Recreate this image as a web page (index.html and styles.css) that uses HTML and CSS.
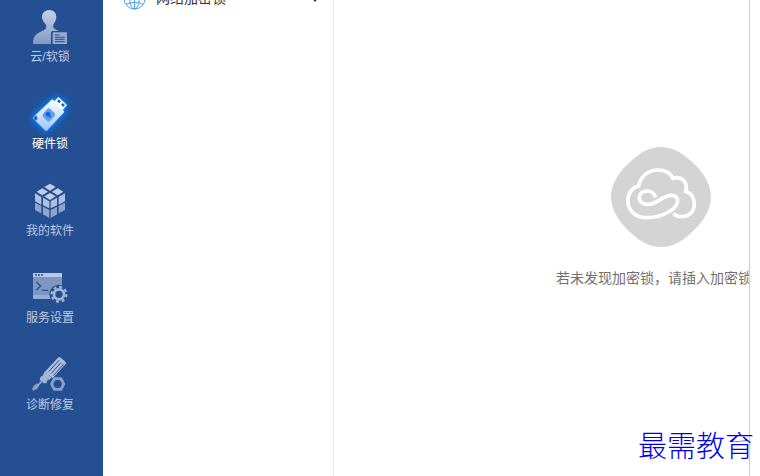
FILE: index.html
```
<!DOCTYPE html>
<html lang="zh-CN">

<head>
    <meta charset="UTF-8">
    <meta name="viewport" content="width=device-width, initial-scale=1.0">
    <title>加密锁</title>
    <link rel="stylesheet" href="styles.css">
</head>

<body>
    <div class="app">
        <nav class="sidebar">
            <button type="button" class="nav-item">
                <svg class="nav-icon" viewBox="90 24 120 120">
                    <defs>
                        <linearGradient id="fade" x1="0" y1="0" x2="0" y2="1">
                            <stop offset="0" stop-color="#c6d1e6" />
                            <stop offset="1" stop-color="#8199c3" />
                        </linearGradient>
                    </defs>
                    <path fill="url(#fade)" d="M148 30c13 0 21 9 21 22 0 10-6 16-9 22-2 7 0 11 6 14l10 5h-18q-5 0-5 5v34H99c0-22 9-31 26-38 9-4 14-7 14-15 0-9-13-13-13-28 0-12 9-21 22-21z" />
                    <rect x="158" y="97" width="43" height="35" rx="2" fill="#94a9ce" />
                    <path stroke="#245093" stroke-width="3" d="M165 105h13M165 112h29M165 118h29M165 125h29" />
                </svg>
                <span>云/软锁</span>
            </button>
            <button type="button" class="nav-item active">
                <svg class="nav-icon" viewBox="90 45 120 120">
                    <defs>
                        <linearGradient id="usb" x1="0" y1="0" x2="0" y2="1">
                            <stop offset="0" stop-color="#ffffff" />
                            <stop offset="1" stop-color="#9cc6fa" />
                        </linearGradient>
                    </defs>
                    <path fill="#ffffff" d="M175 51l26 24-15 17-26-25z" />
                    <path fill="#1167d8" d="M176 58l7 6-5 6-7-6zM188 69l7 6-5 6-7-6z" />
                    <path fill="url(#usb)" d="M154 60q3-3 6 0l31 32q3 3 0 6l-49 53q-4 3-7 0l-34-34q-3-3 0-7z" />
                    <path fill="#5f9ff0" d="M146 85q3 0 6 3l11 11q4 4 1 9l-14 15q-4 4-9 0l-11-11q-4-5-1-10l12-14q2-3 5-3z" />
                    <circle cx="144" cy="103" r="7" fill="#1167d8" />
                    <path stroke="#1167d8" stroke-width="5" d="M145 105l7 7" />
                    <path fill="#1167d8" d="M105 107q9 2 7 9-2 7-7 5-6-7 0-14z" />
                </svg>
                <span>硬件锁</span>
            </button>
            <button type="button" class="nav-item">
                <svg class="nav-icon" viewBox="90 36 120 120">
                    <path fill="#c2cee4" d="M150 41l17 10-17 11-17-11zM127 55l17 10-17 11-17-11zM173 55l17 10-17 11-17-11zM150 69l17 10-17 11-17-11z" />
                    <path fill="#b0bfdb" d="M105 70l19 11v23l-19-10zM129 83l19 11v21l-19-9zM195 70l-19 11v23l19-10zM171 83l-19 11v21l19-9z" />
                    <path fill="#8ea4cb" d="M105 98l19 10v22l-19-10zM129 110l19 10v24l-19-11zM195 98l-19 10v22l19-10zM171 110l-19 10v24l19-11z" />
                </svg>
                <span>我的软件</span>
            </button>
            <button type="button" class="nav-item">
                <svg class="nav-icon" viewBox="90 27 120 120">
                    <rect x="99" y="39" width="87" height="78" rx="3" fill="#7d96c2" />
                    <path fill="#bdc9e1" d="M99 51V42q0-3 3-3h81q3 0 3 3v9z" />
                    <path fill="#9aadd0" d="M99 105h87v12h-84q-3 0-3-3z" />
                    <path stroke="#245093" stroke-width="5" stroke-dasharray="6 3" d="M105 45h24" />
                    <path fill="none" stroke="#245093" stroke-width="4" d="M109 66l13 12-13 12M126 91h18" />
                    <circle cx="177" cy="103" r="29" fill="#245093" />
                    <circle cx="177" cy="103" r="15" fill="none" stroke="#a3b4d4" stroke-width="8" />
                    <circle cx="177" cy="103" r="22" fill="none" stroke="#a3b4d4" stroke-width="7" stroke-dasharray="8.6 8.68" />
                </svg>
                <span>服务设置</span>
            </button>
            <button type="button" class="nav-item">
                <svg class="nav-icon" viewBox="90 33 120 120">
                    <path fill="#aebdda" d="M174 38q4-4 8 0l14 12q4 3 1 7l-39 43-23-20z" />
                    <path stroke="#245093" stroke-width="3" d="M177 46l-31 34M184 52l-31 34M191 58l-31 34" />
                    <path fill="#a3b4d5" d="M134 79l20 18-5 7h-6l-4 11h-8l-12-11 2-7 8-6z" />
                    <path stroke="#92a7cd" stroke-width="5" d="M127 107l-14 15" />
                    <path fill="#8aa0c9" d="M111 115l7 6-7 11-12 5q-4-1-2-6l4-9z" />
                    <path fill="none" stroke="#8da3ca" stroke-width="7" stroke-linejoin="round" d="M163 100h20l9 17-9 17h-20l-9-17z" />
                    <circle cx="173" cy="117" r="14" fill="none" stroke="#8da3ca" stroke-width="3" />
                </svg>
                <span>诊断修复</span>
            </button>
        </nav>

        <aside class="locks">
            <button type="button" class="lock-group">
                <svg class="globe" viewBox="0 0 24 24" fill="none" stroke="#4a9bf5">
                    <circle cx="12" cy="12" r="11" />
                    <ellipse cx="12" cy="12" rx="5" ry="11" />
                    <path d="M12 1v22M1 12h22M3 6q9 4 18 0M3 18q9-4 18 0" />
                </svg>
                <span class="lock-name">网络加密锁</span>
                <svg class="arrow" viewBox="0 0 10 8">
                    <path fill="#333" d="M0 2l2-2 3 3 3-3 2 2-5 6z" />
                </svg>
            </button>
        </aside>

        <main class="content">
            <div class="empty">
                <svg class="cloud" viewBox="33 36 300 300">
                    <path fill="#d4d4d4" d="M183 36c38 0 65 19 94 46 33 30 56 66 56 104s-23 74-56 104c-29 27-56 46-94 46s-65-19-94-46c-33-30-56-66-56-104s23-74 56-104c29-27 56-46 94-46z" />
                    <path fill="none" stroke="#fff" stroke-width="11" d="M167 187C162 173 153 168 142 168C127 168 118 177 118 188C118 201 130 208 145 208C171 208 188 181 214 181C226 181 233 188 233 197C233 220 190 248 142 248C107 248 84 228 84 197C84 174 96 159 116 153C122 124 145 105 173 105C195 105 211 114 219 130C245 122 265 142 257 169C273 174 283 189 283 207C283 230 267 245 246 245C235 245 226 242 221 235" />
                </svg>
                <p>若未发现加密锁，请插入加密锁</p>
            </div>
        </main>
    </div>
    <div class="watermark">最需教育</div>
</body>

</html>
```
FILE: styles.css
```
* {
    margin: 0;
    padding: 0;
    box-sizing: border-box;
}

body {
    font-family: "Liberation Sans", "Noto Sans CJK SC", sans-serif;
    background: #fff;
    overflow: hidden;
}

button {
    font-family: inherit;
    border: none;
    background: none;
    cursor: pointer;
}

.app {
    display: flex;
    min-height: 100vh;
    margin-right: 10px;
    border-right: 1px solid #ccc;
    overflow: hidden;
}

.sidebar {
    flex: 0 0 103px;
    display: flex;
    flex-direction: column;
    gap: 29px;
    padding: 8px 3px 0 0;
    background: #245093;
}

.nav-item {
    display: flex;
    flex-direction: column;
    align-items: center;
    font-size: 12px;
    line-height: 18px;
    color: #bdcae2;
}

.nav-item.active {
    color: #fff;
}

.nav-icon {
    width: 40px;
    height: 40px;
    overflow: visible;
}

.nav-item.active .nav-icon {
    filter: drop-shadow(0 0 3px #0a80ff) drop-shadow(0 0 3px #0a70f0);
}

.locks {
    flex: 0 0 231px;
    border-right: 1px solid #e5e5e5;
}

/* list is scrolled, the first row is cut by the top edge */
.lock-group {
    display: flex;
    align-items: center;
    gap: 10px;
    width: 100%;
    height: 24px;
    margin-top: -14px;
    padding: 0 13px 0 20px;
    font-size: 14px;
    line-height: 20px;
    color: #333;
}

.globe {
    width: 23px;
    height: 23px;
}

.lock-name {
    flex: 1;
    text-align: left;
}

.arrow {
    width: 10px;
    height: 8px;
}

.content {
    flex: 1;
    min-width: 0;
    overflow: hidden;
}

.empty {
    display: flex;
    flex-direction: column;
    align-items: center;
    gap: 20px;
    width: 210px;
    margin: 147px 0 0 222px;
}

.cloud {
    width: 100px;
    height: 100px;
}

.empty p {
    width: 100%;
    font-size: 14px;
    line-height: 22px;
    color: #707070;
    white-space: nowrap;
}

.watermark {
    position: absolute;
    right: 6px;
    bottom: 14px;
    font-family: KaiTi, "Noto Sans CJK SC", sans-serif;
    font-size: 29px;
    font-weight: 300;
    line-height: 36px;
    color: #0000f0;
}
```
